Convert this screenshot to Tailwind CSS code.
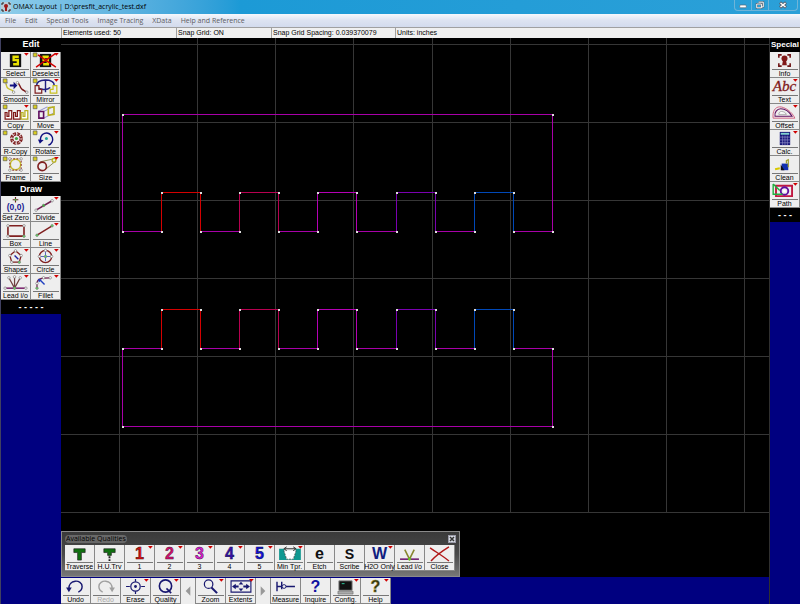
<!DOCTYPE html>
<html lang="en">
<head>
    <meta charset="UTF-8">
    <meta name="viewport" content="width=device-width, initial-scale=1.0">
    <title>OMAX Layout</title>
    <script src="https://cdn.jsdelivr.net/npm/@tailwindcss/browser@4"></script>
</head>
<body class="flex flex-col h-screen overflow-hidden bg-[#000080] font-['Liberation_Sans',Arial,sans-serif] text-[7px] leading-[8px] text-black">
    <header class="flex items-center h-[14px] shrink-0 bg-linear-to-r from-[#8fcdea] via-[#1c9ad6] via-30% to-[#2ba0d8]">
        <svg class="w-[10px] h-[10px] ml-px" viewBox="0 0 10 10"><rect width="10" height="10" fill="#b9ccd8"/><path d="M1 3V1h2M7 1h2v2M9 7v2H7M3 9H1V7" fill="none" stroke="#222"/><circle cx="5" cy="4" r="2" fill="#a01818"/><path d="M4 5h2v4H4z" fill="#a01818"/></svg>
        <h1 class="ml-[2px] text-[7px] leading-[12px] font-['Open_Sans',sans-serif]">OMAX Layout | D:\presfit_acrylic_test.dxf</h1>
        <div class="flex ml-auto mr-[2px] self-start h-[11px] rounded-b-sm border border-t-0 border-[#6fb4d8]">
            <button aria-label="Minimize" class="w-[17px] border-r border-[#6fb4d8]"><svg class="size-full" viewBox="0 0 17 10"><rect x="5" y="5" width="7" height="3" rx="1" fill="#fff" stroke="#56606e" stroke-width=".7"/></svg></button>
            <button aria-label="Restore" class="w-[17px] border-r border-[#6fb4d8]"><svg class="size-full" viewBox="0 0 17 10"><path d="M7 2h5v5h-2M5 4h5v4H5z" fill="none" stroke="#56606e" stroke-width="2"/><path d="M7 2h5v5h-2M5 4h5v4H5z" fill="none" stroke="#fff"/></svg></button>
            <button aria-label="Close" class="w-[28px]"><svg class="size-full" viewBox="0 0 28 10"><path d="M11 2.500l6 5M17 2.500l-6 5" stroke="#56606e" stroke-width="3"/><path d="M11.500 3l5 4M16.500 3l-5 4" stroke="#fff" stroke-width="1.500"/></svg></button>
        </div>
    </header>

    <nav class="flex items-center gap-[9px] h-[13px] shrink-0 pl-[5px] bg-linear-to-b from-[#f6f8fc] via-[#dde3f1] to-[#d3dbed] text-[7px] text-[#5c5c62] font-['Open_Sans',sans-serif]">
        <button>File</button>
        <button>Edit</button>
        <button>Special Tools</button>
        <button>Image Tracing</button>
        <button>XData</button>
        <button>Help and Reference</button>
    </nav>

    <div class="flex h-[11px] shrink-0 bg-[#f0f0f0] border-t border-[#a0a0a0] leading-[10px]">
        <div class="w-[61px]"></div>
        <div class="w-[115px] border-l border-[#a0a0a0] pl-px">Elements used: 50</div>
        <div class="w-[95px] border-l border-[#a0a0a0] pl-px">Snap Grid: ON</div>
        <div class="w-[124px] border-l border-[#a0a0a0] pl-px">Snap Grid Spacing: 0.039370079</div>
        <div class="flex-1 border-l border-[#a0a0a0] pl-px">Units: inches</div>
    </div>

    <div class="flex flex-1 min-h-0">
        <aside class="w-[61px] shrink-0 border-l border-[#404060]">
            <h2 class="h-[14px] bg-black text-white text-[9px] leading-[13px] font-bold text-center">Edit</h2>
            <div id="edit" class="grid grid-cols-2"></div>
            <h2 class="h-[14px] bg-black text-white text-[9px] leading-[14px] font-bold text-center">Draw</h2>
            <div id="draw" class="grid grid-cols-2"></div>
            <div class="h-[14px] bg-black text-white text-[9px] leading-[14px] font-bold text-center">- - - - -</div>
        </aside>

        <div class="flex flex-col flex-1 min-w-0">
            <main class="relative flex-1 min-h-0 bg-black">
                <svg class="absolute inset-0 size-full">
                    <g id="grid" transform="translate(-61 -38)" stroke="#363636"></g>
                    <g id="part" transform="translate(-60.500 -37.500)" fill="none"></g>
                </svg>
                <section class="absolute left-0 bottom-0 w-[399px] h-[46px] px-[3px] border border-[#8a8a8a] bg-linear-to-b from-[#3a3a3a] via-[#484848] to-[#777]">
                    <div class="flex items-center justify-between h-[13px]">
                        <h2 class="px-px text-[7px] text-black bg-[#686868] rounded-sm font-['Open_Sans',sans-serif]">Available Qualities</h2>
                        <button aria-label="Close palette" class="size-[8px] bg-[#d8dce4] border border-[#9a9aa8]"><svg class="size-full" viewBox="0 0 6 6"><path d="M1 1l4 4M5 1l-4 4" stroke="#333" stroke-width="1.500"/></svg></button>
                    </div>
                    <div id="qualities" class="flex"></div>
                </section>
            </main>
            <footer id="actions" class="flex h-[27px] shrink-0 pt-px bg-[#000080]"></footer>
        </div>

        <aside class="w-[31px] shrink-0 border-l border-[#303030]">
            <h2 class="h-[14px] bg-black text-white text-[8px] leading-[13px] font-bold text-center whitespace-nowrap">Special</h2>
            <div id="special" class="grid"></div>
            <div class="h-[14px] bg-black text-white text-[9px] leading-[14px] font-bold text-center">- - -</div>
        </aside>
    </div>

    <script>
        // c = red corner, y = yellow corner, d = disabled
        const glyph = (t, color, extra = '') => `<text x="15" y="15" text-anchor="middle" font-size="17" font-weight="bold" fill="${color}" ${extra}>${t}</text>`;
        const dot = (x, y, color = '#fff') => `<circle cx="${x}" cy="${y}" r="1.300" fill="${color}" stroke="#777" stroke-width=".7"/>`;
        const tri = '<path d="M24 1h5l-2.500 3z" fill="#d00000"/>';
        const sq = '<path d="M2 1h4v4H2z" fill="#d8cc20" stroke="#555" stroke-width=".7"/>';
        const five = 'M18.500 5h-5.500V8.500h4.500V13h-5';
        const select = `<path d="M9 2h12v14H9z" fill="#111"/><path d="${five}" fill="none" stroke="#e8e000" stroke-width="2.500"/>`;

        const tools = {
            edit: [
                ['Select', 'c', select],
                ['Deselect', 'cy', select + '<path d="M7 3l19 13M25 2L5 16" stroke="#d00000" stroke-width="1.500"/>'],
                ['Smooth', 'y', '<path d="M5 5c0 4 1 6 4 7s3 1 4 4" fill="none" stroke="#c8c030" stroke-width="1.500"/><path d="M17 5c3 1 2 5 5 7s3 1 5 4" fill="none" stroke="#7a1818" stroke-width="1.500"/><path d="M9 7h4V4l4 4-4 4V9H9z" fill="#101080"/>' + dot(5,5) + dot(13,15) + dot(17,5) + dot(27,15)],
                ['Mirror', 'cy', '<path d="M6 9C3 0 26 0 24 8M15 2v13" fill="none" stroke="#202080" stroke-width="1.500"/><path d="M6 9c3 4 11 4 14 1" fill="none" stroke="#202080" stroke-width="1.500"/><path d="M4 8v8h7v-4H8V8z" fill="#eee" stroke="#802020" stroke-width="1.300"/><path d="M27 8v8h-7v-4h3V8z" fill="#eee" stroke="#c8c020" stroke-width="1.300"/>'],
                ['Copy', 'cy', '<path d="M4 9h2v4h2V7h3v9H4z" fill="#fff" stroke="#801818" stroke-width="1.300"/><path d="M13 9h2v4h2V7h3v9h-7z" fill="#fff" stroke="#801818" stroke-width="1.300"/><path d="M21 9h2v4h2V7h3v9h-7z" fill="#fff" stroke="#b8b020" stroke-width="1.300"/>'],
                ['Move', 'y', '<path d="M7 8l10-5M13 8l10-5M13 15l10-5" stroke="#8888d0"/><path d="M18 4l6-1v8l-6 1z" fill="none" stroke="#b8b020" stroke-width="1.700"/><path d="M8 8h5v7H8z" fill="none" stroke="#601060" stroke-width="1.700"/>'],
                ['R-Copy', 'y', '<circle cx="16" cy="9" r="5" fill="none" stroke="#802020" stroke-width="3.500" stroke-dasharray="3 .900"/><circle cx="16" cy="9" r="5" fill="none" stroke="#fff" stroke-dasharray="1.500 2.400"/><circle cx="16" cy="9" r="1.700" fill="#40a040"/>'],
                ['Rotate', 'cy', '<path d="M10 12A6.500 6.500 0 1 1 18 16" fill="none" stroke="#101080" stroke-width="1.500"/><path d="M7 10l6 .5-4 4z" fill="#101080"/><circle cx="16" cy="9" r="1.600" fill="#20a0a0"/>'],
                ['Frame', 'y', '<circle cx="15" cy="9" r="5.500" fill="none" stroke="#c8c030" stroke-width="1.500"/><path d="M9 3h12v12H9z" fill="none" stroke="#802020" stroke-dasharray="2 1.500"/>' + dot(9,3) + dot(21,3) + dot(9,15) + dot(21,15)],
                ['Size', 'cy', '<path d="M10 6l14-3M14 15L25 6" stroke="#888850" /><circle cx="24" cy="4.500" r="2" fill="#eee" stroke="#b8b020" stroke-width="1.400"/><circle cx="11.500" cy="11" r="4.500" fill="#eee" stroke="#802020" stroke-width="1.700"/>'],
            ],
            draw: [
                ['Set Zero', '', '<path d="M15 1v6M12 4h6" stroke="#702020" stroke-width="1.200"/><circle cx="15" cy="4" r="1" fill="#40c040"/><text x="15" y="15" text-anchor="middle" font-size="9" font-weight="bold" fill="#202090">(0,0)</text>'],
                ['Divide', 'c', '<path d="M5 15L22 5" stroke="#702050" stroke-width="1.700"/>' + dot(5,15) + dot(13,10,'#30c030') + dot(22,5)],
                ['Box', '', '<path d="M7 4h17v11H7z" fill="none" stroke="#802020" stroke-width="1.700"/>' + dot(7,4) + dot(24,4) + dot(7,15) + dot(24,15,'#60e060')],
                ['Line', 'c', '<path d="M6 14L22 4" stroke="#802020" stroke-width="1.500"/>' + dot(6,14,'#60e060') + dot(22,4,'#60e060')],
                ['Shapes', 'c', '<path d="M15 3l6 5-2 7h-8l-2-7z" fill="none" stroke="#802020" stroke-width="1.400"/><path d="M14 8l4 4" stroke="#2020a0" stroke-width="1.500"/>' + dot(15,3) + dot(21,8) + dot(19,15,'#60e060') + dot(11,15) + dot(9,8)],
                ['Circle', 'c', '<circle cx="15" cy="9" r="6.500" fill="none" stroke="#802020" stroke-width="1.500"/><path d="M15 4v10M10 9h10" stroke="#5060c0"/>' + dot(15,2.5) + dot(21.5,9) + dot(8.5,9) + dot(15,9,'#60e060')],
                ['Lead i/o', 'c', '<path d="M4 15h22" stroke="#701060" stroke-width="1.500"/><path d="M8 4l6 11 6-11M14 3v11" fill="none" stroke="#704040" stroke-width="1.300"/>' + dot(8,4) + dot(14,3) + dot(20,4) + dot(14,15,'#60e060') + dot(4,15) + dot(26,15)],
                ['Fillet', 'c', '<path d="M6 15V10C6 5 10 4 20 4" fill="none" stroke="#702050" stroke-width="1.300"/><path d="M14 11L9 6" stroke="#2040c0" stroke-width="1.500"/><path d="M7 5l4 1-3 3z" fill="#2040c0"/>' + dot(6,15,'#60e060') + dot(6,10) + dot(13,4) + dot(20,4)],
            ],
            special: [
                ['Info', '', '<path d="M9 6V3h3M18 3h3v3M21 12v3h-3M12 15H9v-3" fill="none" stroke="#701818" stroke-width="1.700"/><circle cx="15" cy="7" r="3.200" fill="#801818"/><path d="M13.500 8h3l1 6h-5z" fill="#801818"/>'],
                ['Text', 'c', '<text x="15" y="14" text-anchor="middle" font-family="Liberation Serif" font-style="italic" font-size="16" fill="#801818" stroke="#801818" stroke-width=".3">Abc</text>'],
                ['Offset', 'c', '<path d="M3 15C2 8 5 3 10 3s13 5 16 12z" fill="none" stroke="#d06080"/><path d="M5 13c-1-4 2-8 6-8s9 3 12 8z" fill="none" stroke="#601060" stroke-width="1.200"/><path d="M9 11c0-2 1-3 3-3s4 1 5 3z" fill="#fff" stroke="#888" stroke-width=".7"/>'],
                ['Calc.', 'c', '<path d="M10 2h11v14H10z" fill="#16167a"/><path d="M11 4h9" stroke="#80d0d0" stroke-width="2"/><path d="M10 7.500h11M10 10.500h11M10 13.500h11M13 6v10M15.500 6v10M18 6v10" stroke="#9090c8" stroke-width=".7"/>'],
                ['Clean', '', '<path d="M12 8h7v7h-7z" fill="#1030b0"/><path d="M11 9v6h4" fill="#111"/><path d="M17 8V5l2-1v8" fill="none" stroke="#a0a030" stroke-width="1.300"/><path d="M5 14l5-1" stroke="#d8c800" stroke-width="2"/>'],
                ['Path', 'c', '<path d="M6 4h17v11H6z" fill="none" stroke="#c01840" stroke-width="2"/><circle cx="15" cy="9.500" r="4" fill="#eee" stroke="#6010a0" stroke-width="2"/><path d="M3 2v11h10M3 2l7 7" fill="none" stroke="#20b040" stroke-width="1.500"/><circle cx="15" cy="9.500" r="1.500" fill="#fff"/>'],
            ],
            qualities: [
                ['Traverse', '', '<path d="M9 4h12v4h-4v8h-4V8H9z" fill="#107010" stroke="#222" stroke-width=".7"/>'],
                ['H.U.Trv', '', '<path d="M9 4h12v4h-4v3h-4V8H9z" fill="#107010" stroke="#222" stroke-width=".7"/><path d="M15 12v5" stroke="#222" stroke-width="2" stroke-dasharray="2 1"/>'],
                ['1', 'c', glyph('1', '#e01010', 'stroke="#401010" stroke-width=".5"')],
                ['2', 'c', glyph('2', '#d81070', 'stroke="#401030" stroke-width=".5"')],
                ['3', 'c', glyph('3', '#e020d8', 'stroke="#401040" stroke-width=".5"')],
                ['4', 'c', glyph('4', '#3810b0', 'stroke="#101040" stroke-width=".5"')],
                ['5', 'c', glyph('5', '#1010e0', 'stroke="#101040" stroke-width=".5"')],
                ['Min Tpr.', 'c', '<path d="M4 4h5l3 11h7l3-11h5v12H4z" fill="#109890"/><path d="M9 6l3 9h7l3-9" fill="#fff" stroke="#444" stroke-width=".8" stroke-dasharray="2 1"/><path d="M10 4h11M12 2l-3 2 3 2M19 2l3 2-3 2" fill="none" stroke="#222"/>'],
                ['Etch', '', glyph('e', '#111')],
                ['Scribe', '', '<text x="15" y="15" text-anchor="middle" font-size="15" font-weight="bold" fill="#111">S</text>'],
                ['H2O Only', 'c', glyph('W', '#102080')],
                ['Lead i/o', '', '<path d="M10 5l5 10 5-10" fill="none" stroke="#888830" stroke-width="1.700"/><path d="M5 15h20" stroke="#702070" stroke-width="1.700"/><circle cx="15" cy="15" r="1.500" fill="#60d020"/>'],
                ['Close', '', '<path d="M5 3c7 5 13 8 20 14M25 2C17 7 11 11 6 17" fill="none" stroke="#b01818" stroke-width="1.500"/>'],
            ],
            actions: [
                ['Undo', '', '<path d="M8 12C7 1 22 1 22 9c0 3-2 5-4 6" fill="none" stroke="#181870" stroke-width="1.500"/><path d="M5 10h6l-3 5z" fill="#181870"/>'],
                ['Redo', 'd', '<path d="M22 12C23 1 8 1 8 9c0 3 2 5 4 6" fill="none" stroke="#a0a0a0" stroke-width="1.500"/><path d="M19 10h6l-3 5z" fill="#a0a0a0"/>'],
                ['Erase', 'c', '<circle cx="15" cy="9" r="5" fill="none" stroke="#181870" stroke-width="1.300"/><path d="M15 1v3M15 14v3M5 9h4M21 9h4" stroke="#181870" stroke-width="1.300"/><circle cx="15" cy="9" r="1.500" fill="#181870"/>'],
                ['Quality', 'c', '<circle cx="15" cy="8.500" r="6.500" fill="none" stroke="#181870" stroke-width="1.700"/><path d="M16 11l5 5" stroke="#181870" stroke-width="1.700"/>'],
                'left',
                ['Zoom', 'c', '<circle cx="13" cy="6.500" r="4.500" fill="none" stroke="#181870" stroke-width="1.300"/><path d="M16 10l6 6" stroke="#181870" stroke-width="2.200"/>'],
                ['Extents', 'c', '<path d="M5 3h21v12H5z" fill="none" stroke="#181870" stroke-width="1.200"/><path d="M15.500 4l2.500 3h-5zM15.500 14l2.500-3h-5zM6 9l4-3v2h3v2h-3v2zM25 9l-4-3v2h-3v2h3v2z" fill="#181870"/>'],
                'right',
                ['Measure', '', '<path d="M6 4v10M11 4v8M6 9h5M14 9h11" stroke="#181870" stroke-width="1.500"/><circle cx="13.500" cy="9" r="2" fill="#eee" stroke="#181870"/>'],
                ['Inquire', '', glyph('?', '#1010a0')],
                ['Config.', 'c', '<path d="M8 3h14v10H8z" fill="#111" stroke="#888"/><path d="M7 14h16v3H7z" fill="#aaa" stroke="#666" stroke-width=".6"/><path d="M11 6h3" stroke="#30d0a0"/>'],
                ['Help', 'c', glyph('?', '#303010', 'stroke="#888820" stroke-width=".5"')],
            ],
        };

        const button = ([label, flags, icon]) => `
            <button class="flex flex-col items-center w-[30px] h-[26px] bg-[#eee] border-r border-b border-[#888]">
                <svg class="w-[29px] h-[17px] shrink-0" viewBox="0 0 30 18">${icon}${flags.includes('y') ? sq : ''}${flags.includes('c') ? tri : ''}</svg>
                <span class="w-[26px] h-px shrink-0 bg-[#777]"></span>
                <span class="leading-[7px] whitespace-nowrap ${flags.includes('d') ? 'text-[#a8a8a8]' : 'text-black'}">${label}</span>
            </button>`;
        const arrow = (dir) => `
            <button aria-label="Scroll ${dir}" class="w-[15px] h-[26px] bg-[#eee] border-r border-[#888]">
                <svg class="size-full" viewBox="0 0 15 26"><path d="${dir === 'left' ? 'M10 8v10l-5-5z' : 'M5 8v10l5-5z'}" fill="#999"/></svg>
            </button>`;

        for (const [id, list] of Object.entries(tools)) {
            document.getElementById(id).innerHTML = list.map(t => typeof t === 'string' ? arrow(t) : button(t)).join('');
        }

        // grid, one line per inch
        let grid = '';
        for (const x of [119, 197, 275, 353, 432, 510, 588, 666, 744]) grid += `<path d="M${x}.5 38V513"/>`;
        for (const y of [44, 122, 200, 278, 356, 434, 512]) grid += `<path d="M60 ${y}.5H2000"/>`;
        document.getElementById('grid').innerHTML = grid;

        const teeth = [[161, 200, '#d40000'], [239, 278, '#b80050'], [317, 356, '#b400b4'], [396, 435, '#7a00b0'], [474, 513, '#0048b8']];
        const draw = (base, tip, far) => {
            let lines = '', dots = '', x = 122;
            const mark = (px, py) => { dots += `<rect x="${px - .5}" y="${py - .5}" width="2" height="2" fill="#ddd"/>`; };
            for (const [a, b, color] of teeth) {
                lines += `<path d="M${x} ${base}H${a}" stroke="#a800a8"/><path d="M${a} ${base}V${tip}H${b}V${base}" stroke="${color}"/>`;
                mark(a, base); mark(a, tip); mark(b, tip); mark(b, base);
                x = b;
            }
            lines += `<path d="M${x} ${base}H552V${far}H122V${base}" stroke="#a800a8"/>`;
            mark(122, base); mark(552, base); mark(122, far); mark(552, far);
            return lines + dots;
        };
        document.getElementById('part').innerHTML = draw(231, 192, 114) + draw(348, 309, 426);
    </script>
</body>
</html>
